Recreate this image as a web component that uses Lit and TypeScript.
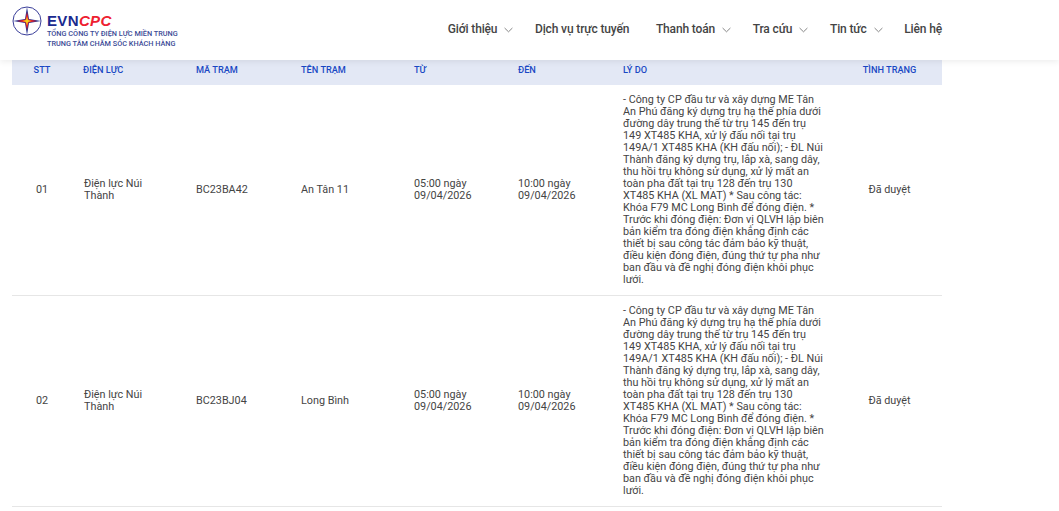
import { LitElement, html, css, svg } from "lit";
import { customElement } from "lit/decorators.js";

const REASON =
  "- Công ty CP đầu tư và xây dựng ME Tân An Phú đăng ký dựng trụ hạ thế phía dưới đường dây trung thế từ trụ 145 đến trụ 149 XT485 KHA, xử lý đấu nối tại trụ 149A/1 XT485 KHA (KH đấu nối); - ĐL Núi Thành đăng ký dựng trụ, lắp xà, sang dây, thu hồi trụ không sử dụng, xử lý mất an toàn pha đất tại trụ 128 đến trụ 130 XT485 KHA (XL MAT) * Sau công tác: Khóa F79 MC Long Bình để đóng điện. * Trước khi đóng điện: Đơn vị QLVH lập biên bản kiểm tra đóng điện khẳng định các thiết bị sau công tác đảm bảo kỹ thuật, điều kiện đóng điện, đúng thứ tự pha như ban đầu và đề nghị đóng điện khôi phục lưới.";

const ROWS = [
  { stt: "01", dl: "Điện lực Núi Thành", ma: "BC23BA42", ten: "An Tân 11" },
  { stt: "02", dl: "Điện lực Núi Thành", ma: "BC23BJ04", ten: "Long Bình" },
];

const NAV = [
  { t: "Giới thiệu", c: true },
  { t: "Dịch vụ trực tuyến", c: false },
  { t: "Thanh toán", c: true },
  { t: "Tra cứu", c: true },
  { t: "Tin tức", c: true },
  { t: "Liên hệ", c: false },
];

const chevron = svg`<svg class="chev" width="9" height="6" viewBox="0 0 9 6" fill="none"><path d="M.6 1 4.5 4.8 8.4 1" stroke="#777" stroke-width=".9"/></svg>`;

const logo = svg`<svg class="mark" width="30" height="30" viewBox="0 0 30 30">
  <circle cx="15" cy="15" r="14" fill="#fff" stroke="#3b3f9a" stroke-width="1"/>
  <path d="M15 1 17 13 29 15 17 17 15 29 13 17 1 15 13 13Z" fill="#26308f"/>
  <path d="M15 6 16.6 13.4 25 15 16.6 16.6 15 24 13.4 16.6 5 15 13.4 13.4Z" fill="#e3202b"/>
  <path d="M15 10.5 16 14 19.5 15 16 16 15 19.5 14 16 10.5 15 14 14Z" fill="#f6d21a"/>
</svg>`;

@customElement("app-root")
export class AppRoot extends LitElement {
  static styles = css`
    :host {
      display: block;
      height: 511px;
      overflow: hidden;
      background: #fff;
      font-family: Roboto, "Liberation Sans", sans-serif;
    }
    .page {
      position: relative;
      height: 511px;
      overflow: hidden;
    }
    header {
      position: absolute;
      inset: 0 0 auto 0;
      z-index: 2;
      height: 60px;
      box-sizing: border-box;
      background: #fff;
      box-shadow: 0 2px 6px rgba(0, 0, 0, 0.07);
      display: flex;
      align-items: flex-start;
      justify-content: space-between;
      padding: 6px 117px 0 12px;
    }
    .brand {
      display: flex;
      align-items: flex-start;
      gap: 5px;
    }
    .mark {
      display: block;
    }
    .brand-text {
      display: flex;
      flex-direction: column;
    }
    .wordmark {
      font-family: "Liberation Sans", Arial, sans-serif;
      font-weight: 700;
      font-size: 15px;
      line-height: 16px;
      margin-top: 7px;
      letter-spacing: 0.35px;
      color: #1a2a8f;
    }
    .wordmark i {
      color: #ee2030;
    }
    .sub {
      font-size: 7.3px;
      font-weight: 500;
      line-height: 9.5px;
      color: #3b4a96;
      white-space: nowrap;
    }
    .sub:first-of-type {
      margin-top: 4px;
    }
    nav {
      display: flex;
      align-items: center;
      height: 46px;
      font-size: 12px;
      font-weight: 500;
      color: #444;
      letter-spacing: -0.14px;
    }
    .item {
      display: flex;
      align-items: center;
      white-space: nowrap;
      margin-left: 21.6px;
    }
    .item.first {
      margin-left: 0;
    }
    .item.plain {
      margin-right: 5px;
    }
    .item.plain:last-child {
      margin-right: 0;
    }
    .chev {
      margin-left: 7px;
      margin-top: 1px;
    }
    main {
      padding: 54px 117px 0 12px;
    }
    table {
      width: 930px;
      table-layout: fixed;
      border-collapse: collapse;
      font-size: 10.8px;
      line-height: 12px;
      color: #444;
    }
    th {
      height: 31px;
      padding: 0 0 0 13px;
      box-sizing: border-box;
      background: #e3e8f5;
      color: #1a48c4;
      font-size: 9.2px;
      font-weight: 500;
      text-align: left;
    }
    td {
      padding: 9px 13px;
      border-bottom: 1px solid #e6e6e6;
      vertical-align: middle;
    }
    td.center,
    th.center {
      text-align: center;
      padding-left: 0;
      padding-right: 0;
    }
    td.stt,
    th.stt {
      padding-left: 2px;
    }
    td.unit {
      padding-left: 14px;
    }
    .c-58 { width: 58px; }
    .c-113 { width: 113px; }
    .c-105 { width: 105px; }
    .c-104 { width: 104px; }
    .c-227 { width: 227px; }
  `;

  render() {
    return html`
      <div class="page">
        <header>
          <div class="brand">
            ${logo}
            <div class="brand-text">
              <div class="wordmark">EVN<i>CPC</i></div>
              <div class="sub">TỔNG CÔNG TY ĐIỆN LỰC MIỀN TRUNG</div>
              <div class="sub">TRUNG TÂM CHĂM SÓC KHÁCH HÀNG</div>
            </div>
          </div>
          <nav>
            ${NAV.map(
              (n, i) => html`<div class="item ${i === 0 ? "first" : ""} ${n.c ? "" : "plain"}">${n.t}${n.c ? chevron : ""}</div>`
            )}
          </nav>
        </header>
        <main>
          <table>
            <colgroup>
              <col class="c-58" /><col class="c-113" /><col class="c-105" /><col class="c-113" /><col class="c-104" /><col class="c-105" /><col class="c-227" /><col class="c-105" />
            </colgroup>
            <thead>
              <tr>
                <th class="center stt">STT</th>
                <th>ĐIỆN LỰC</th>
                <th>MÃ TRẠM</th>
                <th>TÊN TRẠM</th>
                <th>TỪ</th>
                <th>ĐẾN</th>
                <th>LÝ DO</th>
                <th class="center">TÌNH TRẠNG</th>
              </tr>
            </thead>
            <tbody>
              ${ROWS.map(
                (r) => html`<tr>
                  <td class="center stt">${r.stt}</td>
                  <td class="unit">${r.dl}</td>
                  <td>${r.ma}</td>
                  <td>${r.ten}</td>
                  <td>05:00 ngày 09/04/2026</td>
                  <td>10:00 ngày 09/04/2026</td>
                  <td>${REASON}</td>
                  <td class="center">Đã duyệt</td>
                </tr>`
              )}
            </tbody>
          </table>
        </main>
      </div>
    `;
  }
}
